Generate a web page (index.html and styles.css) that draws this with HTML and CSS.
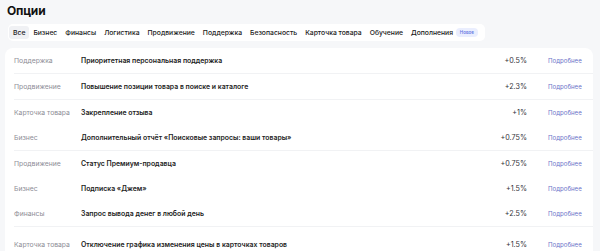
FILE: index.html
```html
<!DOCTYPE html>
<html lang="ru">
<head>
<meta charset="utf-8">
<title>Опции</title>
<link rel="stylesheet" href="styles.css">
</head>
<body>
<div class="options_layout">
	<h1 class="options-title">Опции</h1>

	<div class="options-tabs">
		<span class="options-tab active">Все</span>
		<span class="options-tab">Бизнес</span>
		<span class="options-tab">Финансы</span>
		<span class="options-tab">Логистика</span>
		<span class="options-tab">Продвижение</span>
		<span class="options-tab">Поддержка</span>
		<span class="options-tab">Безопасность</span>
		<span class="options-tab">Карточка товара</span>
		<span class="options-tab">Обучение</span>
		<span class="options-tab">Дополнения <span class="options-badge">Новое</span></span>
	</div>

	<div class="options-list">
		<div class="options-row sep">
			<div class="options-category">Поддержка</div>
			<div class="options-name">Приоритетная персональная поддержка</div>
			<div class="options-value">+0.5%</div>
			<a class="options-more">Подробнее</a>
		</div>
		<div class="options-row sep">
			<div class="options-category">Продвижение</div>
			<div class="options-name">Повышение позиции товара в поиске и каталоге</div>
			<div class="options-value">+2.3%</div>
			<a class="options-more">Подробнее</a>
		</div>
		<div class="options-row">
			<div class="options-category">Карточка товара</div>
			<div class="options-name">Закрепление отзыва</div>
			<div class="options-value">+1%</div>
			<a class="options-more">Подробнее</a>
		</div>
		<div class="options-row sep">
			<div class="options-category">Бизнес</div>
			<div class="options-name">Дополнительный отчёт «Поисковые запросы: ваши товары»</div>
			<div class="options-value">+0.75%</div>
			<a class="options-more">Подробнее</a>
		</div>
		<div class="options-row">
			<div class="options-category">Продвижение</div>
			<div class="options-name">Статус Премиум-продавца</div>
			<div class="options-value">+0.75%</div>
			<a class="options-more">Подробнее</a>
		</div>
		<div class="options-row">
			<div class="options-category">Бизнес</div>
			<div class="options-name">Подписка «Джем»</div>
			<div class="options-value">+1.5%</div>
			<a class="options-more">Подробнее</a>
		</div>
		<div class="options-row sep">
			<div class="options-category">Финансы</div>
			<div class="options-name">Запрос вывода денег в любой день</div>
			<div class="options-value">+2.5%</div>
			<a class="options-more">Подробнее</a>
		</div>
		<div class="options-row last">
			<div class="options-category">Карточка товара</div>
			<div class="options-name">Отключение графика изменения цены в карточках товаров</div>
			<div class="options-value">+1.5%</div>
			<a class="options-more">Подробнее</a>
		</div>
	</div>
</div>
</body>
</html>
```

FILE: styles.css
```css
html, body { margin: 0; background: #f6f7f9; }
body { font-family: Inter, "Noto Sans", sans-serif; color: #1f1f24; }

.options_layout { padding: 3px 5px 0 5px; }
.options-title { font-size: 12px; font-weight: 700; margin: 0 0 6px 2px; line-height: 15px; color: #111; letter-spacing: -0.2px; }

.options-tabs {
	display: flex;
	width: fit-content;
	align-items: center;
	background: #fff;
	border-radius: 5px;
	padding: 2px 3px 2px 1px;
	margin-left: 3px;
}
.options-tabs .options-tab {
	font-size: 6.8px;
	font-weight: 500;
	line-height: 13px;
	padding: 0 4px;
	color: #1a1a1a;
	border-radius: 3px;
	white-space: nowrap;
}
.options-tabs .options-tab.active { background: #f0f1f4; }
.options-tabs .options-badge {
	font-size: 4.5px;
	color: #5a6ee0;
	background: #eaeefe;
	border-radius: 4px;
	padding: 2px 4px;
	margin-left: 1px;
	vertical-align: 1px;
}

.options-list {
	background: #fff;
	border-radius: 8px;
	margin: 7px 2px 0 0;
	padding: 0 0 0 9px;
}
.options-list .options-row {
	display: flex;
	align-items: center;
	height: 25px;
}
.options-list .options-row.sep { border-bottom: 1px solid #f1f2f4; }
.options-list .options-row.last { height: 28px; padding-top: 3px; }
.options-list .options-category { width: 67px; color: #8e8e96; font-size: 6.8px; }
.options-list .options-name { flex: 1; font-weight: 600; color: #1c1c22; font-size: 6.9px; }
.options-list .options-value { width: 63px; text-align: right; color: #33333a; font-size: 7.2px; }
.options-list .options-more {
	width: 45px;
	padding-left: 21px;
	font-size: 6.1px;
	color: #6c72c9;
	cursor: pointer;
}
```
